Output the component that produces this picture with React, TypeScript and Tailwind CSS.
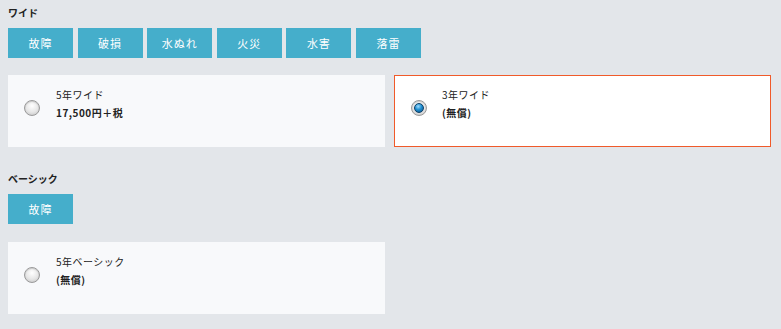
import React from "react";

const font = { fontFamily: '"Noto Sans CJK JP", "Noto Sans", sans-serif' };

function Radio({ checked }: { checked?: boolean }) {
  return (
    <div className="w-4 h-4 shrink-0 rounded-full border border-[#9a9a9a] bg-[radial-gradient(circle_at_50%_35%,#ffffff_0%,#e6e6e6_55%,#bdbdbd_100%)] flex items-center justify-center shadow-[inset_0_1px_1px_rgba(0,0,0,0.15)]">
      {checked && (
        <div className="w-[10px] h-[10px] rounded-full bg-[radial-gradient(circle_at_40%_30%,#9fdcff_0%,#1f8fd0_45%,#0b4f86_100%)] border border-[#0d3f66]" />
      )}
    </div>
  );
}

function Card({ title, price, checked }: { title: string; price: string; checked?: boolean }) {
  return (
    <div
      className={
        "w-[377px] h-[72px] flex items-center pl-4 " +
        (checked ? "bg-white border border-[#f05a2a]" : "bg-[#f8f9fb]")
      }
    >
      <div className="-mt-[6px]">
        <Radio checked={checked} />
      </div>
      <div className={checked ? "ml-[15px] -mt-[14px]" : "ml-4 -mt-[14px]"}>
        <div className="text-[10px] leading-[18px] text-[#222] tracking-[0.5px]">{title}</div>
        <div className="text-[10px] leading-[18px] font-bold text-[#222] tracking-[0.5px]">{price}</div>
      </div>
    </div>
  );
}

function Btn({ label }: { label: string }) {
  return (
    <div className="w-[65px] h-[30px] bg-[#45aecb] text-white text-[11px] flex items-center justify-center tracking-[1px]">
      {label}
    </div>
  );
}

export default function App() {
  return (
    <div style={font} className="w-[781px] h-[329px] bg-[#e3e6ea] px-2 pt-[6px]">
      <div className="text-[10px] font-bold text-[#222] leading-[14px]">ワイド</div>
      <div className="flex gap-[4.6px] mt-2">
        {["故障", "破損", "水ぬれ", "火災", "水害", "落雷"].map((l) => (
          <Btn key={l} label={l} />
        ))}
      </div>
      <div className="flex gap-[9px] mt-[17px]">
        <Card title="5年ワイド" price="17,500円＋税" />
        <Card title="3年ワイド" price="(無償)" checked />
      </div>
      <div className="text-[10px] font-bold text-[#222] leading-[14px] mt-[25px]">ベーシック</div>
      <div className="flex mt-2">
        <Btn label="故障" />
      </div>
      <div className="flex mt-[18px]">
        <Card title="5年ベーシック" price="(無償)" />
      </div>
    </div>
  );
}
